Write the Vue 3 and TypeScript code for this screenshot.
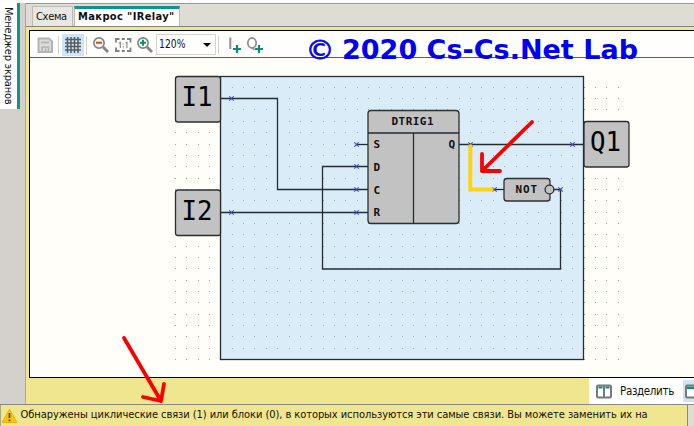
<script setup lang="ts">
interface Pin { x: number; y: number }
interface Terminal { label: string; x: number; y: number }

const terminals: Terminal[] = [
  { label: 'I1', x: 175.5, y: 76.5 },
  { label: 'I2', x: 175.5, y: 190 },
  { label: 'Q1', x: 584, y: 121.5 },
]

const pins: Pin[] = [
  { x: 231.5, y: 98.5 }, { x: 231.5, y: 212.5 },
  { x: 356.5, y: 144.5 }, { x: 356.5, y: 166.5 }, { x: 356.5, y: 189.5 }, { x: 356.5, y: 212.5 },
  { x: 470.5, y: 144.5 }, { x: 572.5, y: 144.5 }, { x: 494.5, y: 189.5 }, { x: 560.5, y: 189.5 },
]

const inputs = [
  { label: 'S', y: 147.5 }, { label: 'D', y: 170.5 },
  { label: 'C', y: 193.5 }, { label: 'R', y: 215.5 },
]

const wires = [
  'M220 98.5H277.5V189.5H368',
  'M220 212.5H368',
  'M356 144.5H368',
  'M368 166.5H322.5V269H560.5V189.5H553',
  'M459 144.5H584',
  'M493 189.5H504',
]

const dots: Pin[] = []
for (let r = 1; r < 26; r++) {
  for (let c = 0; c < 40; c++) {
    dots.push({ x: Math.round(175 + c * 11.35), y: Math.round(75.4 + r * 11.35) })
  }
}
</script>

<template>
  <div class="window">
    <div class="top-strip"></div>
    <div class="body">
      <aside class="side"><div class="side-tab"><span>Менеджер экранов</span></div></aside>
      <main class="editor">
        <nav class="tabs">
          <div class="tab"><span class="t-scheme">Схема</span></div>
          <div class="tab active"><span class="t-macro">Макрос "IRelay"</span></div>
        </nav>
        <section class="frame">
          <div class="toolbar">
            <svg class="tools" width="272" height="26" viewBox="30 31 272 26" fill="none">
              <path d="M38.5 38.5H49L52 41.5V52H38.5Z" fill="#dcdcda" stroke="#b4b4b4" stroke-width="2" />
              <path d="M41 42.5H49" stroke="#b4b4b4" stroke-width="2" />
              <path d="M42 51V47H48.5V51M45.5 48.5V51" stroke="#b4b4b4" stroke-width="1.6" />
              <path d="M58.5 36V54M86.5 36V54M218.5 36V54" stroke="#d0d0cc" />
              <rect x="62" y="34" width="22" height="22" fill="#cfe5f6" />
              <path d="M67.5 37V53M71 37V53M74.5 37V53M78 37V53M65 39.5H81M65 43H81M65 46.5H81M65 50H81" stroke="#555d63" stroke-width="1.5" />
              <circle cx="99" cy="43" r="5.1" stroke="#858585" stroke-width="1.7" />
              <path d="M103 47L108 52" stroke="#858585" stroke-width="2.8" />
              <path d="M96 42.7H102" stroke="#e33c16" stroke-width="2" />
              <path d="M116 42.5V39H119.5M127 39H130.5V42.5M130.5 47.5V51H127M119.5 51H116V47.5M121.8 39H124.8M121.8 51H124.8" stroke="#828282" stroke-width="1.8" />
              <path d="M119 43.2L120.3 42.3V48M125.6 43.2L126.9 42.3V48M123.2 43.4V44.6M123.2 46.2V47.4" stroke="#828282" stroke-width="1.1" />
              <circle cx="143" cy="43" r="5.1" stroke="#858585" stroke-width="1.7" />
              <path d="M147 47L152 52" stroke="#858585" stroke-width="2.8" />
              <path d="M140 42.7H146M143 39.7V45.7" stroke="#078f7b" stroke-width="2" />
              <rect x="156.5" y="34.5" width="59" height="20" fill="#fefffc" stroke="#d5d5d0" />
              <text x="159" y="48" class="ui" textLength="26.5" lengthAdjust="spacingAndGlyphs">120%</text>
              <path d="M203 43H211L207 47Z" fill="#000" />
              <path d="M230.3 37.5V49" stroke="#929292" stroke-width="2" />
              <ellipse cx="252" cy="43" rx="4.2" ry="5" stroke="#929292" stroke-width="1.8" />
              <path d="M252.5 47.5L254 50" stroke="#929292" stroke-width="1.8" />
              <path d="M233 49H241M237 45V53M255 49H263M259 45V53" stroke="#078f7b" stroke-width="2.2" />
            </svg>
          </div>
          <svg class="canvas" width="664" height="319" viewBox="30 58 664 319">
            <rect x="220.5" y="76.5" width="363.5" height="283.5" fill="#daecf8" />
            <rect v-for="(d, i) in dots" :key="i" :x="d.x" :y="d.y" width="1" height="1" class="dot" />
            <rect x="220.5" y="76.5" width="363" height="283" fill="none" stroke="#222d36" stroke-width="1.3" />
            <path v-for="w in wires" :key="w" :d="w" class="wire" />
            <g v-for="t in terminals" :key="t.label">
              <rect :x="t.x" :y="t.y" width="45" height="45.5" rx="2.5" class="block" />
              <text :x="t.x + 21.5" :y="t.y + 29.5" class="terminal" textLength="31" lengthAdjust="spacingAndGlyphs">{{ t.label }}</text>
            </g>
            <rect x="368" y="110.5" width="91" height="113" rx="3" class="block" />
            <path d="M368 133H459M413.5 133V223.5" class="wire" />
            <text x="391.5" y="125" class="pin-label" textLength="42">DTRIG1</text>
            <text v-for="p in inputs" :key="p.label" x="373.5" :y="p.y" class="pin-label">{{ p.label }}</text>
            <text x="448.5" y="147.5" class="pin-label">Q</text>
            <rect x="504" y="178.5" width="46" height="22.5" rx="3" class="block" />
            <circle cx="549.5" cy="189.5" r="4.4" class="block" />
            <text x="515.5" y="193.3" class="pin-label" textLength="21.5">NOT</text>
            <path v-for="(p, i) in pins" :key="'p' + i" :d="`M${p.x - 2.2} ${p.y - 2.2}l4.4 4.4m0 -4.4l-4.4 4.4`" class="pin" />
            <path d="M470.3 144.5V189.5H493.5" fill="none" stroke="#ffd40a" stroke-width="4" />
          </svg>
        </section>
        <footer class="dock">
          <div class="dock-actions">
            <svg width="16" height="15" viewBox="0 0 16 15">
              <rect x="1" y="1.5" width="14" height="12" rx="1" fill="#fff" stroke="#757b7b" stroke-width="2" />
              <path d="M8 1V14" stroke="#757b7b" stroke-width="2" />
              <path d="M2.5 3.5H6.5M9.5 3.5H13.5" stroke="#078f7b" stroke-width="2" />
            </svg>
            <span class="t-split">Разделить</span>
            <div class="dock-active">
              <svg width="9" height="15" viewBox="0 0 9 15">
                <rect x="1" y="1.5" width="14" height="12" rx="1" fill="#fff" stroke="#757b7b" stroke-width="2" />
                <path d="M2 3.8H9" stroke="#078f7b" stroke-width="2.4" />
              </svg>
            </div>
          </div>
        </footer>
      </main>
    </div>
    <div class="status">
      <div class="message">
        <svg width="17" height="16" viewBox="0 0 17 16">
          <path d="M8.5 1L16 14.5H1Z" fill="#f8c414" stroke="#e9b21c" stroke-linejoin="round" />
          <path d="M8.5 5V10M8.5 11.5V13.3" stroke="#4e4930" stroke-width="1.7" />
        </svg>
        <span class="t-status">Обнаружены циклические связи (1) или блоки (0), в которых используются эти самые связи. Вы можете заменить их на</span>
      </div>
    </div>
    <svg class="annotations" width="694" height="426" viewBox="0 0 694 426">
      <text x="305.5" y="59" class="credit thin" textLength="29" lengthAdjust="spacingAndGlyphs">©</text>
      <text x="342" y="59" class="credit" textLength="296" lengthAdjust="spacingAndGlyphs">2020 Cs-Cs.Net Lab</text>
      <path d="M532 122L482 171M482 154V171H500" class="arrow" />
      <path d="M124 338L161 401M143 397L161 401L164 384" class="arrow" />
    </svg>
  </div>
</template>

<style>
body { overflow: hidden; }
</style>

<style scoped>
.window {
  position: relative; width: 694px; height: 426px; overflow: hidden;
  display: flex; flex-direction: column; background: #d4d1cc; color: #111;
  font: 11px/14px "DejaVu Sans Condensed", "DejaVu Sans", sans-serif;
}
.top-strip { height: 3px; background: #fcfcfa; flex: none; }
.body { display: flex; height: 401px; flex: none; }
.side { width: 26px; border-right: 1px solid #aaa9a3; box-sizing: border-box; flex: none; }
.side-tab { width: 17px; height: 102px; background: #fff; border-right: 3px solid #0c958c; padding-top: 4px; }
.side-tab span { display: block; writing-mode: vertical-rl; line-height: 17px; white-space: nowrap; letter-spacing: -0.2px; }
.editor { flex: 1; min-width: 0; display: flex; flex-direction: column; background: #f0e68f; }
.tabs { height: 24px; box-sizing: border-box; background: #dfdcd6; border-top: 1px solid #999993; border-bottom: 1px solid #858477; display: flex; padding: 2px 0 0 6px; flex: none; }
.tab { box-sizing: border-box; width: 41px; height: 20px; border: 1px solid #bcbbb6; border-bottom: 0; background: #e9e7e2; padding: 3px 0 0 3px; white-space: nowrap; }
.t-scheme { letter-spacing: -0.3px; }
.t-macro { letter-spacing: 0.38px; }
.tab.active { width: 106px; margin-left: 1px; border-top: 3px solid #0c958c; background: #fff; font-weight: bold; padding: 1px 0 0 3px; }
.frame { margin: 3px 0 0 3px; border: 1px solid #000; border-right: 0; background: #fffef8; height: 346px; flex: none; }
.toolbar { height: 26px; background: #fefffd; border-bottom: 1px solid #585f59; }
.tools, .canvas { display: block; }
.dock { flex: 1; display: flex; justify-content: flex-end; }
.dock-actions { width: 105px; background: #fff; display: flex; align-items: center; padding-left: 7px; box-sizing: border-box; white-space: nowrap; }
.t-split { margin-left: 8px; width: 54px; font-size: 11.5px; letter-spacing: -0.35px; }
.dock-active { margin-left: auto; width: 11px; height: 22px; background: #cfe3f4; padding-left: 2px; box-sizing: border-box; display: flex; align-items: center; overflow: hidden; }
.status { flex: 1; display: flex; background: #dfdcd6; border-top: 1px solid #898981; }
.message { width: 688px; box-sizing: border-box; border-right: 1px solid #898981; border-left: 1px solid #aaa778; background: #f0e68f; display: flex; padding-top: 3px; white-space: nowrap; }
.t-status { margin-left: 2.5px; letter-spacing: -0.06px; }
.ui { font-size: 12px; fill: #111; }
.dot { fill: #9ba4a9; }
.wire { fill: none; stroke: #222d36; stroke-width: 1.3; }
.block { fill: #c2c2c2; stroke: #2b302f; stroke-width: 1.3; }
.terminal { font: 26px "DejaVu Sans Mono", monospace; text-anchor: middle; fill: #000; }
.pin-label { font: bold 11px "DejaVu Sans Mono", monospace; fill: #111; }
.pin { stroke: #4444dc; stroke-width: 1.1; fill: none; }
.annotations { position: absolute; inset: 0; pointer-events: none; }
.credit { font: bold 27px "DejaVu Sans", sans-serif; fill: #0000f5; }
.credit.thin { font-weight: normal; stroke: #0000f5; stroke-width: 0.7; }
.arrow { fill: none; stroke: #fa0000; stroke-width: 3.8; stroke-linecap: round; stroke-linejoin: round; }
</style>
